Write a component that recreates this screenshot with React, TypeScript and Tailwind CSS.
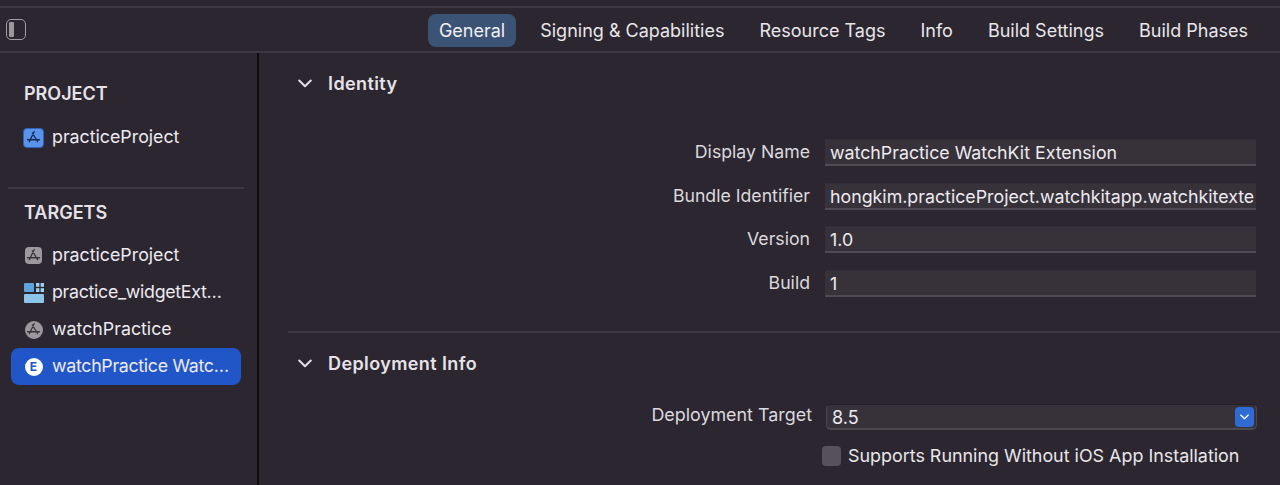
import type { ReactNode } from "react";

const font = "font-['Inter',sans-serif]";

const tabs = [
  "Signing & Capabilities",
  "Resource Tags",
  "Info",
  "Build Settings",
  "Build Phases",
];

const fields = [
  { label: "Display Name", value: "watchPractice WatchKit Extension" },
  { label: "Bundle Identifier", value: "hongkim.practiceProject.watchkitapp.watchkitexte" },
  { label: "Version", value: "1.0" },
  { label: "Build", value: "1" },
];

const AppGlyph = ({ color }: { color: string }) => (
  <svg viewBox="0 0 20 20" className="h-[15px] w-[15px]" fill="none" stroke={color} strokeWidth="1.7" strokeLinecap="round">
    <path d="M11 2 L4.5 15.5 M8.5 4 L15.5 15.5 M2 13 H18" />
  </svg>
);

const Chevron = ({ className }: { className: string }) => (
  <svg viewBox="0 0 14 9" className={className} fill="none" stroke="currentColor" strokeWidth="2" strokeLinecap="round" strokeLinejoin="round">
    <path d="M1.2 1.5 L7 7.3 L12.8 1.5" />
  </svg>
);

const SidebarItem = ({
  icon,
  label,
  selected = false,
  tight = false,
}: {
  icon: ReactNode;
  label: string;
  selected?: boolean;
  tight?: boolean;
}) => (
  <div
    className={`ml-[3px] flex h-[37px] w-[230px] items-center rounded-lg pl-[12px] ${
      selected ? "bg-[#2156c9]" : ""
    }`}
  >
    <span className="flex w-[21px] items-center justify-center">{icon}</span>
    <span className={`ml-[8px] text-[17.8px] text-[#eeeaf0] ${tight ? "tracking-[-0.3px]" : ""}`}>{label}</span>
  </div>
);

const SectionHeader = ({ title }: { title: string }) => (
  <div className="flex h-[24px] items-center">
    <Chevron className="h-[9px] w-[14px] text-[#e2dfe4]" />
    <span className="ml-[15px] pl-[1px] text-[18px] font-semibold tracking-[0.4px] text-[#e6e2e8]">{title}</span>
  </div>
);

export default function App() {
  return (
    <div className={`${font} flex h-[485px] w-[1280px] flex-col overflow-hidden bg-[#2b2630]`}>
      {/* toolbar */}
      <div className="mt-[6px] flex h-[47px] shrink-0 items-center justify-between border-y-2 border-[#3d3940] pl-[6px] pr-[21px]">
        <div className="flex h-[21px] w-[20px] rounded-[5px] border-[1.5px] border-[#a09da3] p-[2px]">
          <div className="h-full w-[5px] rounded-[1px] bg-[#9a979d]" />
        </div>
        <div className="mt-[2px] flex items-center gap-[13px] text-[18px] text-[#e9e6ea]">
          <span className="rounded-lg bg-[#3b5375] px-[11px] py-[3px] text-[#f2f0f3]">General</span>
          {tabs.map((tab) => (
            <span key={tab} className="px-[11px] py-[3px]">
              {tab}
            </span>
          ))}
        </div>
      </div>

      <div className="flex flex-1">
        {/* sidebar */}
        <aside className="w-[259px] shrink-0 border-r-2 border-[#0d0b0e] pl-[8px]">
          <div className="mt-[27px] pl-[16px] text-[18px] font-semibold text-[#e6e2e8]">PROJECT</div>
          <div className="mt-[12px]">
            <SidebarItem
              label="practiceProject"
              icon={
                <span className="flex h-[20px] w-[21px] items-center justify-center rounded-[4px] border border-[#2f62b8] bg-[#5a93ea]">
                  <AppGlyph color="#172a50" />
                </span>
              }
            />
          </div>
          <div className="mt-[31px] w-[236px] border-t-2 border-[#3d3940]" />
          <div className="mt-[10px] pl-[16px] text-[18px] font-semibold text-[#e6e2e8]">TARGETS</div>
          <div className="mt-[11px]">
            <SidebarItem
              label="practiceProject"
              icon={
                <span className="flex h-[17px] w-[17px] items-center justify-center rounded-[4px] bg-[#9c999e]">
                  <AppGlyph color="#38343a" />
                </span>
              }
            />
            <SidebarItem
              tight
              label="practice_widgetExt…"
              icon={
                <svg viewBox="0 0 20 20" className="h-[20px] w-[20px]">
                  <rect x="0" y="0" width="10" height="9" rx="1" fill="#5ea4dc" />
                  <rect x="12" y="0" width="3.4" height="3.8" fill="#9fd0f0" />
                  <rect x="16.6" y="0" width="3.4" height="3.8" fill="#9fd0f0" />
                  <rect x="12" y="5.2" width="3.4" height="3.8" fill="#9fd0f0" />
                  <rect x="16.6" y="5.2" width="3.4" height="3.8" fill="#9fd0f0" />
                  <rect x="0" y="11" width="20" height="9" rx="1" fill="#8cc4ea" />
                </svg>
              }
            />
            <SidebarItem
              label="watchPractice"
              icon={
                <span className="flex h-[18px] w-[18px] items-center justify-center rounded-full bg-[#9c999e]">
                  <AppGlyph color="#38343a" />
                </span>
              }
            />
            <SidebarItem
              selected
              tight
              label="watchPractice Watc…"
              icon={
                <span className="flex h-[18px] w-[18px] items-center justify-center rounded-full bg-white text-[12px] font-bold text-[#2156c9]">
                  E
                </span>
              }
            />
          </div>
        </aside>

        {/* main */}
        <main className="flex-1 pl-[29px]">
          <div className="mt-[18px] pl-[10px]">
            <SectionHeader title="Identity" />
          </div>
          <div className="mt-[44px] flex flex-col gap-[16.5px]">
            {fields.map((f) => (
              <div key={f.label} className="flex h-[27px] items-start">
                <span className="w-[522px] text-right text-[17.7px] leading-[26px] text-[#dcd9de]">{f.label}</span>
                <div className="ml-[15px] h-[27px] w-[431px] overflow-hidden border-t border-b-2 border-t-[#322d36] border-b-[#4f4b53] bg-[#37323a] pl-[5px] text-[17.8px] leading-[26px] whitespace-nowrap text-[#eeeaf0]">
                  {f.value}
                </div>
              </div>
            ))}
          </div>
          <div className="mt-[34.5px] border-t-2 border-[#3d3940]" />
          <div className="mt-[18px] pl-[10px]">
            <SectionHeader title="Deployment Info" />
          </div>
          <div className="mt-[29px] flex h-[26px] items-start">
            <span className="w-[524px] text-right text-[17.9px] leading-[22px] text-[#dcd9de]">Deployment Target</span>
            <div className="ml-[14px] flex h-[26px] w-[431px] items-center justify-between rounded-[5px] border border-b-2 border-[#4c4850] border-t-[#24202a] bg-[#37323a] pl-[5px] pr-[2px] text-[18px] text-[#eeeaf0]">
              <span className="translate-y-px">8.5</span>
              <span className="flex h-[20px] w-[19px] items-center justify-center rounded-[4px] bg-[#2f6bd3]">
                <Chevron className="h-[6px] w-[9px] text-white" />
              </span>
            </div>
          </div>
          <div className="mt-[13px] ml-[534px] flex items-center">
            <span className="h-[20px] w-[19px] rounded-[4px] bg-[#55525a]" />
            <span className="ml-[7px] text-[17.9px] text-[#e9e6ea]">Supports Running Without iOS App Installation</span>
          </div>
        </main>
      </div>
    </div>
  );
}
